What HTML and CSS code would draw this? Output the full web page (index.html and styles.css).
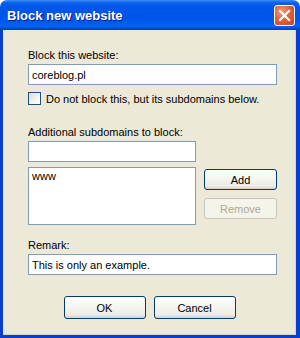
FILE: index.html
```html
<!DOCTYPE html>
<html lang="en">
<head>
  <meta charset="UTF-8">
  <title>Block new website</title>
  <link rel="stylesheet" href="styles.css">
</head>
<body>
  <div class="window">
    <div class="titlebar">
      <span class="title">Block new website</span>
      <button class="close" aria-label="Close">
        <svg width="13" height="13" viewBox="0 0 13 13">
          <path d="M2 2 L11 11 M11 2 L2 11" stroke="#fff" stroke-width="2.2" stroke-linecap="square"/>
        </svg>
      </button>
    </div>

    <div class="client">
      <label class="label first">Block this website:</label>
      <input type="text" class="textbox wide" value="coreblog.pl">

      <div class="check-row">
        <span class="checkbox"></span>
        <span>Do not block this, but its subdomains below.</span>
      </div>

      <label class="label gap">Additional subdomains to block:</label>
      <input type="text" class="textbox narrow">

      <div class="list-row">
        <div class="listbox">www</div>
        <div class="side-buttons">
          <button class="btn small">Add</button>
          <button class="btn small" disabled>Remove</button>
        </div>
      </div>

      <label class="label remark">Remark:</label>
      <input type="text" class="textbox wide" value="This is only an example.">

      <div class="actions">
        <button class="btn big">OK</button>
        <button class="btn big">Cancel</button>
      </div>
    </div>
  </div>
</body>
</html>
```
FILE: styles.css
```css
body {
  margin: 0;
  font-family: "Liberation Sans", Arial, sans-serif;
  font-size: 11px;
  background: #fff;
}
.window {
  width: 300px;
  height: 338px;
  display: flex;
  flex-direction: column;
  box-sizing: border-box;
}
.titlebar {
  height: 30px;
  flex: none;
  display: flex;
  align-items: center;
  justify-content: space-between;
  padding: 0 5px 0 7px;
  border-radius: 7px 7px 0 0;
  background: linear-gradient(#3c8cf6 0, #0a5fe8 3px, #0058ee 6px, #0054e6 14px, #0058ee 22px, #0062f7 26px, #0045d4 29px, #003ac6 30px);
}
.title {
  color: #fff;
  font-weight: bold;
  font-size: 13px;
  text-shadow: 1px 1px #0a1a8a;
  margin-top: 1px;
}
.close {
  width: 21px;
  height: 21px;
  padding: 0;
  border: 1px solid #fff;
  border-radius: 3px;
  background: radial-gradient(circle at 35% 30%, #f19a7c 0, #e2623c 45%, #c8441b 100%);
  display: flex;
  align-items: center;
  justify-content: center;
  margin-top: 1px;
}
.client {
  flex: 1;
  background: #ece9d8;
  border: 3px solid #0a3ed0;
  border-top: none;
  border-right-width: 4px;
  padding: 0 0 0 25px;
  display: flex;
  flex-direction: column;
  align-items: flex-start;
  box-shadow: inset -1px -1px 0 #d8d4c6;
}
.label {
  height: 13px;
  line-height: 13px;
  color: #000;
}
.label.first {
  margin-top: 19px;
}
.label.gap {
  margin-top: 21px;
}
.label.remark {
  margin-top: 14px;
}
.textbox {
  box-sizing: border-box;
  height: 21px;
  margin: 2px 0 0;
  padding: 0 3px;
  border: 1px solid #7f9db9;
  background: #fff;
  font-family: inherit;
  font-size: 11px;
  color: #000;
}
.textbox.wide {
  width: 249px;
}
.textbox.narrow {
  width: 168px;
}
.check-row {
  display: flex;
  align-items: center;
  gap: 5px;
  margin-top: 7px;
  height: 13px;
}
.checkbox {
  box-sizing: border-box;
  width: 13px;
  height: 13px;
  border: 1px solid #1c5180;
  background: linear-gradient(135deg, #dcdcd7 0, #f5f5f2 60%, #fff 100%);
}
.list-row {
  display: flex;
  gap: 8px;
  margin-top: 5px;
}
.listbox {
  box-sizing: border-box;
  width: 168px;
  height: 58px;
  border: 1px solid #7f9db9;
  background: #fff;
  padding: 2px 3px;
}
.side-buttons {
  display: flex;
  flex-direction: column;
  gap: 8px;
  margin-top: 2px;
}
.btn {
  box-sizing: border-box;
  border: 1px solid #003c74;
  border-radius: 3px;
  background: linear-gradient(#ffffff 0, #f4f4f0 50%, #ecebe6 85%, #d6d0c5 100%);
  font-family: inherit;
  font-size: 11px;
  color: #000;
  padding: 0;
}
.btn:disabled {
  border-color: #c9c7ba;
  background: #f5f4ea;
  color: #aca899;
}
.btn.small {
  width: 73px;
  height: 21px;
}
.btn.big {
  width: 82px;
  height: 23px;
}
.actions {
  align-self: stretch;
  margin-left: -25px;
  margin-top: 21px;
  display: flex;
  justify-content: center;
  gap: 8px;
}
```
